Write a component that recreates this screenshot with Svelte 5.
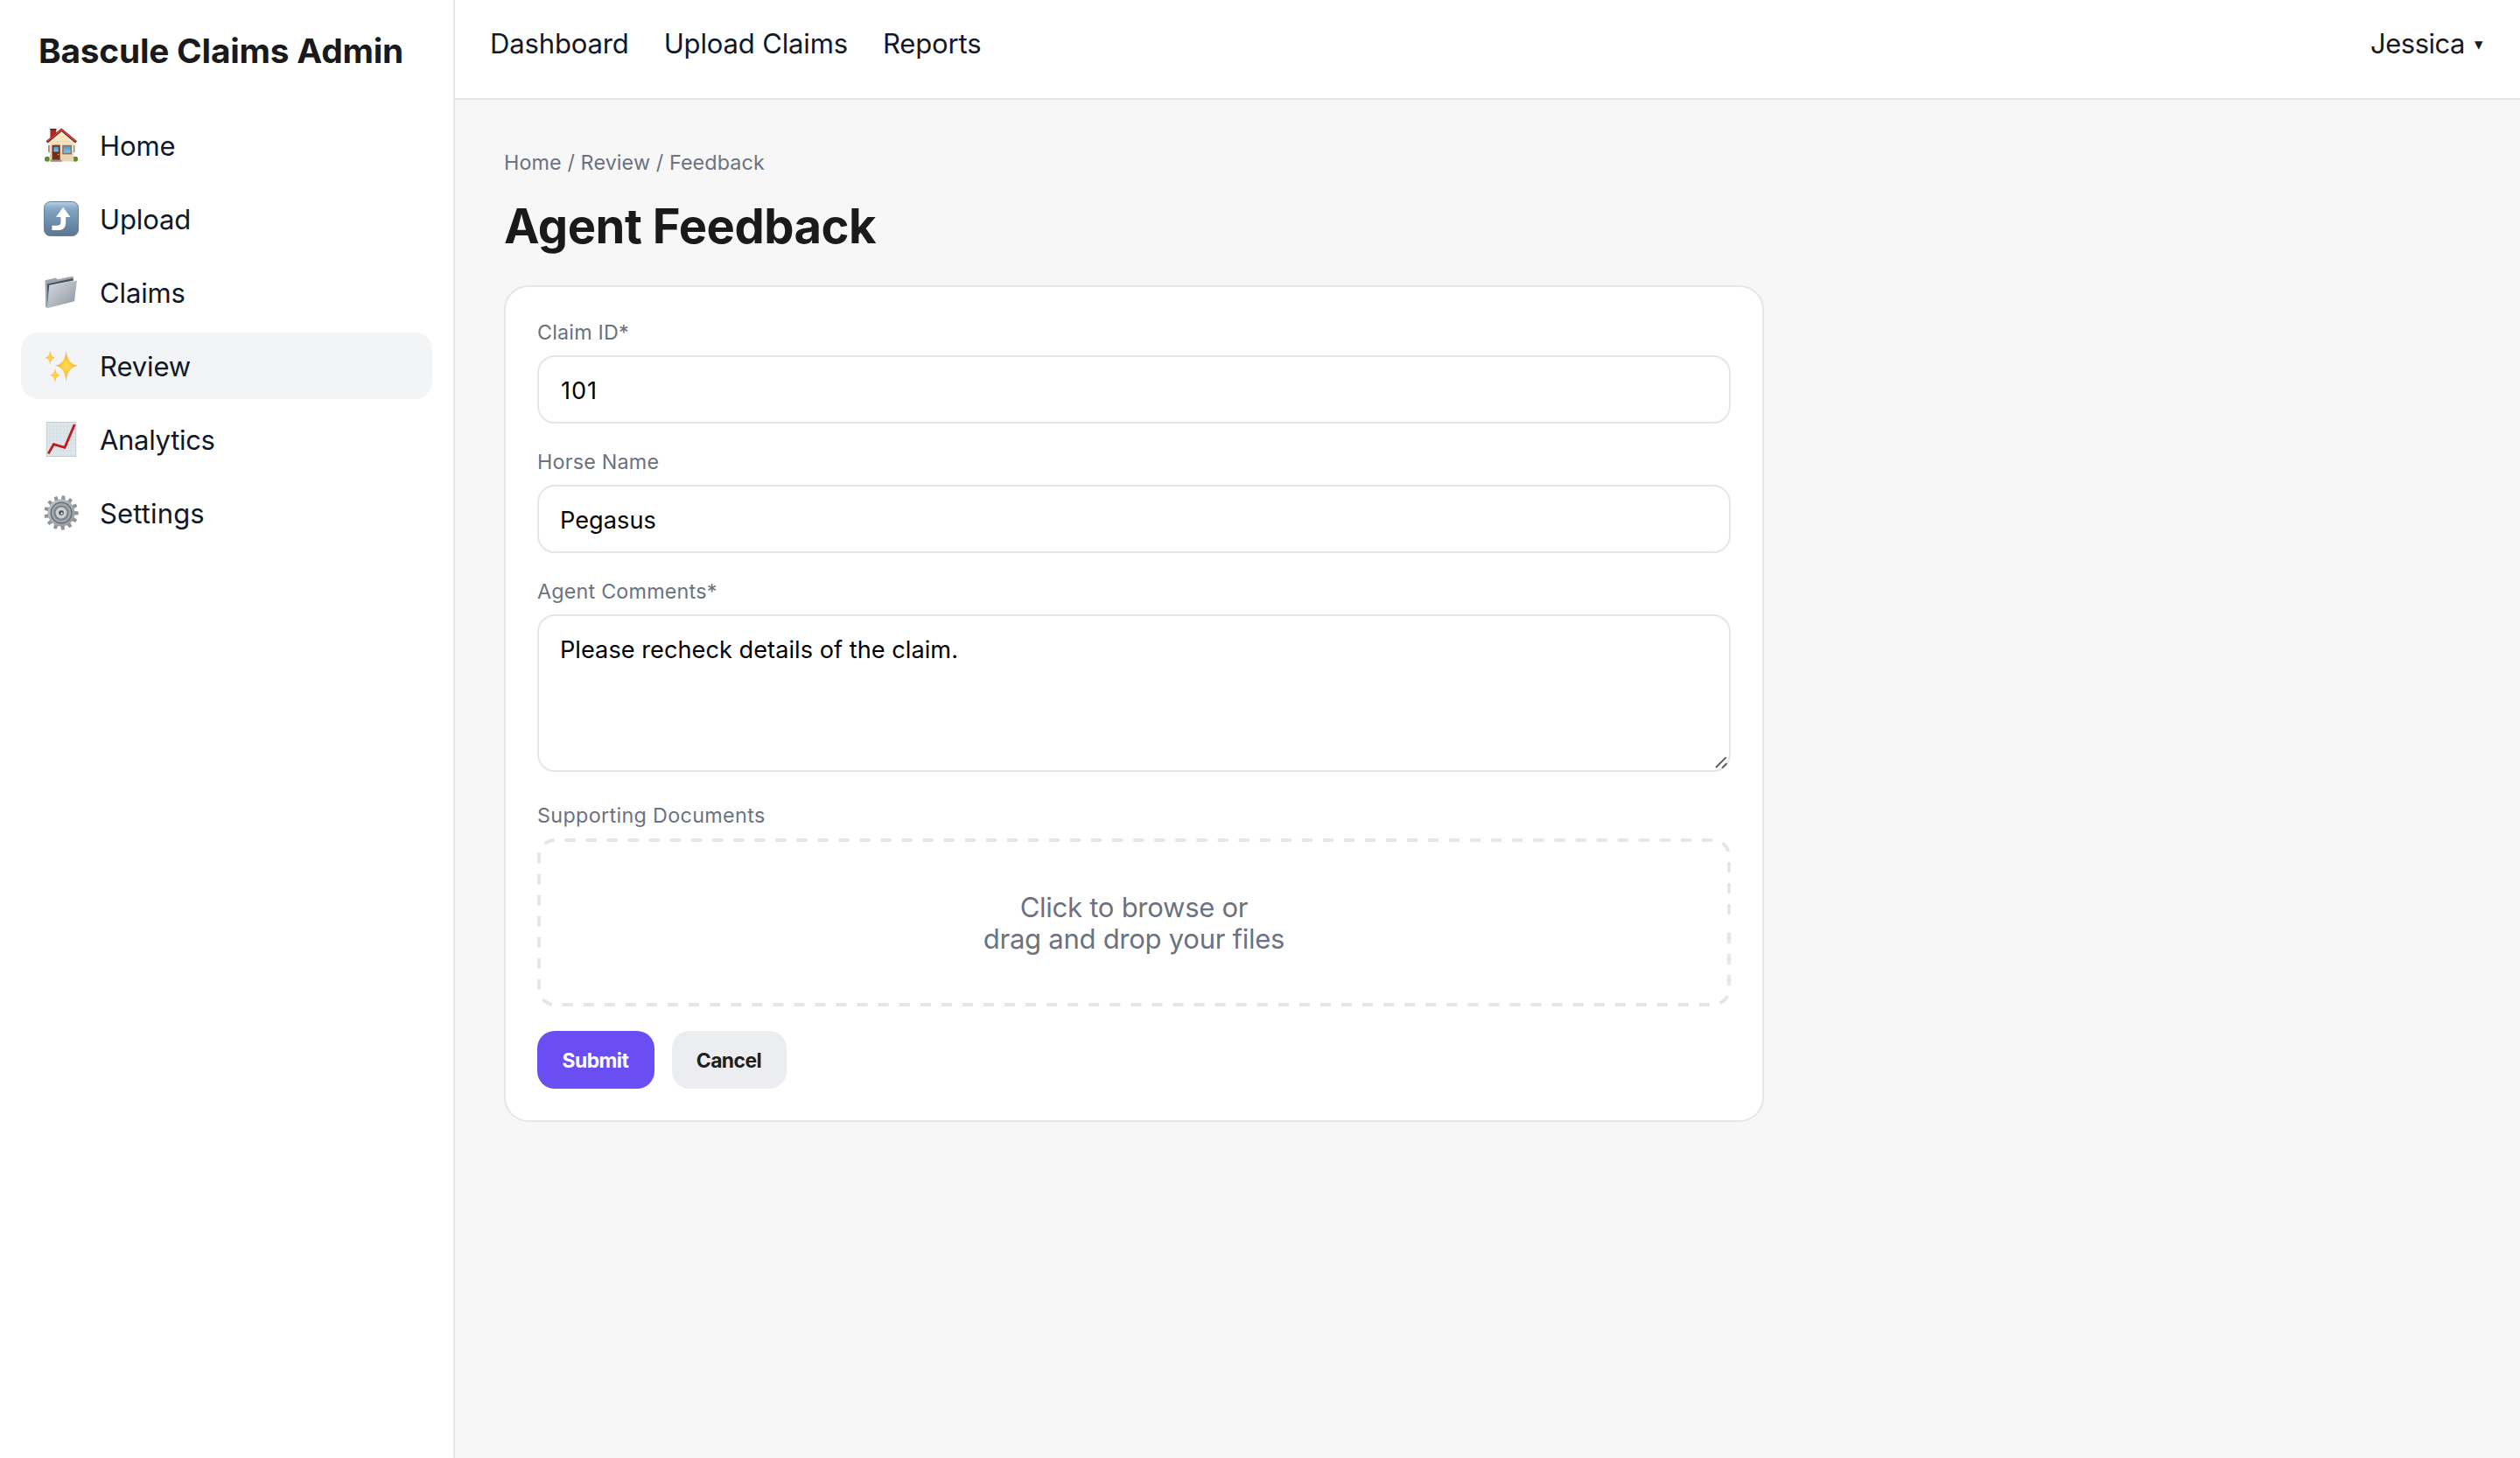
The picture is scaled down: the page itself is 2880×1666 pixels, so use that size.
<script>
  const menu = ['Home', 'Upload', 'Claims', 'Review', 'Analytics', 'Settings'];
  const active = 'Review';
  const links = ['Dashboard', 'Upload Claims', 'Reports'];
  const teeth = Array.from({ length: 13 }, (_, i) => (i * 360) / 13);

  let claimId = $state('101');
  let horseName = $state('Pegasus');
  let comments = $state('Please recheck details of the claim.');
</script>

{#snippet icon(name)}
  <svg class="icon" viewBox="0 0 40 40" aria-hidden="true">
    {#if name === 'Home'}
      <defs>
        <linearGradient id="wall" x1="0" y1="0" x2="0" y2="1">
          <stop offset="0" stop-color="#fdeccb" /><stop offset="1" stop-color="#e9d3ae" />
        </linearGradient>
        <linearGradient id="pane" x1="0" y1="0" x2="0" y2="1">
          <stop offset="0" stop-color="#4a97d6" /><stop offset="1" stop-color="#86c2ee" />
        </linearGradient>
      </defs>
      <path d="M7.4 1.2h6.8v8l-6.8 5.6z" fill="#a92b25" />
      <path d="M7.2 1h7.2v1.6H7.2z" fill="#7c1b18" />
      <circle cx="4" cy="35.8" r="3" fill="#5a8a2c" />
      <circle cx="36" cy="35.8" r="3" fill="#5a8a2c" />
      <path d="M5.2 20h1.8v8H5.2zM33.6 20h1.8v8h-1.8z" fill="#8a7a6a" />
      <path d="M6.6 15 20.3 3.8 34.2 15v23.6H6.6z" fill="url(#wall)" />
      <path d="M6.8 28h27M6.8 33h27M7 22h26M11 15.5h18" stroke="#dfc7a0" stroke-width=".4" />
      <path d="M3.6 16.4 20.3 2.4 37 16.4" fill="none" stroke="#3a2422" stroke-width="3" />
      <path d="M4 15.6 20.3 2.2 36.6 15.6" fill="none" stroke="#dc3a35" stroke-width="1.9" />
      <path d="M9.4 19.6h9.4v17.8H9.4z" fill="#8d4a34" />
      <path d="M10.2 20.4h7.8v16.2h-7.8z" fill="#6d2f20" />
      <path d="M11.4 21.6h5.4v5.8h-5.4z" fill="url(#pane)" />
      <circle cx="16.6" cy="30.6" r=".9" fill="#d9a441" />
      <path d="M21.2 19.8H32v10.6H21.2z" fill="#93705a" />
      <path d="M22.6 21.2h8v7.4h-8z" fill="url(#pane)" />
      <path d="M7.6 36.6h13v2.2h-13z" fill="#9b8f88" />
    {:else if name === 'Upload'}
      <defs>
        <linearGradient id="key" x1="0" y1="0" x2="0" y2="1">
          <stop offset="0" stop-color="#bcd2e2" /><stop offset=".16" stop-color="#8fafcb" />
          <stop offset=".3" stop-color="#7b9fc0" /><stop offset="1" stop-color="#5b7690" />
        </linearGradient>
      </defs>
      <rect x=".5" y=".5" width="39" height="39" rx="7" fill="url(#key)" stroke="#64809a" />
      <path d="M22.2 6.8 30.4 18h-5.2v6.4c0 5.8-3.4 8.6-9.2 8.6H9.4v-5.2h5.4c3.2 0 4.6-1.2 4.6-4.4V18H14z" fill="#fff" />
    {:else if name === 'Claims'}
      <defs>
        <linearGradient id="flap" x1="0" y1="0" x2="1" y2="1">
          <stop offset="0" stop-color="#d5d8dd" /><stop offset=".5" stop-color="#b4b9c1" />
          <stop offset="1" stop-color="#8b929c" />
        </linearGradient>
      </defs>
      <path d="M1.6 6.2 14 3.6l1.6 1.6L33.6 1.4l.6 8L4.4 37.6l-2.4-.8z" fill="#9da6b0" />
      <path d="M4 10.6 33.6 4v5L5.6 20l-1.2 17z" fill="#43545f" />
      <path d="M6.2 12.4 38 6.2 35 30.2 3.9 38.2z" fill="url(#flap)" />
      <path d="M6.2 12.4 38 6.2" stroke="#eceef1" stroke-width=".8" />
    {:else if name === 'Review'}
      <defs>
        <radialGradient id="spark">
          <stop offset="0" stop-color="#ffe14d" /><stop offset=".4" stop-color="#fdc93f" />
          <stop offset="1" stop-color="#f0a050" />
        </radialGradient>
      </defs>
      <g fill="url(#spark)">
        <path d="M25.6 2.4Q27 18 39.2 19.8 27 21.6 25.6 38 24.2 21.6 12.8 19.8 24.2 18 25.6 2.4z" />
        <path d="M7.3 2.4Q8 9.6 12.8 10.4 8 11.4 7.3 19 6.6 11.4 1.8 10.4 6.6 9.6 7.3 2.4z" />
        <path d="M13 22.8Q13.8 30 18.8 30.8 13.8 31.6 13 38.6 12.2 31.6 7.2 30.8 12.2 30 13 22.8z" />
      </g>
    {:else if name === 'Analytics'}
      <rect x="3.2" y=".6" width="33.6" height="38.8" fill="#dfe7ec" stroke="#b9c0c5" stroke-width=".8" />
      <path d="M7 1v38M11 1v38M15 1v38M19 1v38M23 1v38M27 1v38M31 1v38M4 5h32M4 9h32M4 13h32M4 17h32M4 21h32M4 25h32M4 29h32M4 33h32" stroke="#cbd6de" stroke-width=".5" />
      <path d="M5.2 36.4 11.4 25.6 24 29.4 35.2 3" fill="none" stroke="#c4161c" stroke-width="2.8" />
    {:else}
      <defs>
        <linearGradient id="metal" x1="0" y1="0" x2="1" y2="1">
          <stop offset="0" stop-color="#c3c7ca" /><stop offset="1" stop-color="#8f959a" />
        </linearGradient>
      </defs>
      {#each teeth as angle}
        <path d="M17.6 6.4 18.2.4h3.6l.6 6z" fill="#8d949a" transform="rotate({angle + 8} 20 20)" />
      {/each}
      <circle cx="20" cy="20" r="15.4" fill="url(#metal)" />
      <circle cx="20" cy="20" r="11.8" fill="#a3a9ad" stroke="#666d73" stroke-width="1.4" />
      <circle cx="20" cy="20" r="8.8" fill="#7d8489" />
      <circle cx="20" cy="20" r="6.4" fill="#cdd0d3" />
      <circle cx="20" cy="20" r="2.8" fill="#4c5358" />
      <circle cx="20.6" cy="20.6" r="1.2" fill="#dfe2e4" />
    {/if}
  </svg>
{/snippet}

<div class="app">
  <aside class="sidebar">
    <div class="brand">Bascule Claims Admin</div>
    <nav class="menu">
      {#each menu as item}
        <a class="menu-item {item.toLowerCase()}" class:active={item === active} href="#{item.toLowerCase()}">
          {@render icon(item)}
          <span>{item}</span>
        </a>
      {/each}
    </nav>
  </aside>

  <div class="page">
    <header class="topbar">
      <nav class="links">
        {#each links as link}
          <a href="#top">{link}</a>
        {/each}
      </nav>
      <div class="user"><span>Jessica</span><span class="caret">▾</span></div>
    </header>

    <main class="content">
      <div class="crumbs">Home / Review / Feedback</div>
      <h1>Agent Feedback</h1>

      <form class="card" onsubmit={(e) => e.preventDefault()}>
        <div class="field">
          <label for="claim">Claim ID*</label>
          <input id="claim" class="digits" bind:value={claimId} />
        </div>
        <div class="field">
          <label for="horse">Horse Name</label>
          <input id="horse" bind:value={horseName} />
        </div>
        <div class="field comments">
          <label for="comments">Agent Comments*</label>
          <div class="area">
            <textarea id="comments" bind:value={comments}></textarea>
            <svg class="grip" viewBox="0 0 16 16" aria-hidden="true">
              <path d="M2 14 13.6 2.4M9 14.6l5.4-5.4" />
            </svg>
          </div>
        </div>
        <div class="field">
          <div class="label docs">Supporting Documents</div>
          <div class="dropzone">
            <svg class="outline" viewBox="0 0 1364 192" aria-hidden="true">
              <path d="M1362 96V172A18 18 0 0 1 1344 190H20A18 18 0 0 1 2 172V20A18 18 0 0 1 20 2H1344A18 18 0 0 1 1362 20V96" />
            </svg>
            <div>Click to browse or</div>
            <div>drag and drop your files</div>
          </div>
        </div>
        <div class="actions">
          <button class="submit" type="submit">Submit</button>
          <button class="cancel" type="button">Cancel</button>
        </div>
      </form>
    </main>
  </div>
</div>

<style>
  :global(body) {
    margin: 0;
    background: #f7f7f7;
  }
  .app {
    display: flex;
    min-height: 1666px;
    font-family: Inter, 'Liberation Sans', sans-serif;
    color: #1c1c1e;
  }
  a {
    color: #111827;
    text-decoration: none;
  }
  .sidebar {
    box-sizing: border-box;
    flex: none;
    width: 520px;
    padding: 34px 24px;
    background: #fff;
    border-right: 2px solid #e5e5ea;
  }
  .brand {
    padding-left: 20px;
    margin-bottom: 46px;
    font-size: 38.8px;
    font-weight: 700;
    line-height: 48px;
    letter-spacing: -0.2px;
    color: #1a1a1a;
  }
  .menu {
    display: flex;
    flex-direction: column;
    gap: 8px;
  }
  .menu-item {
    display: flex;
    align-items: center;
    gap: 24px;
    height: 76px;
    padding: 0 26px;
    border-radius: 20px;
    font-size: 31px;
    letter-spacing: -0.12px;
  }
  .menu-item span {
    padding-top: 1px;
  }
  .menu-item.analytics {
    letter-spacing: -0.3px;
  }
  .menu-item.settings {
    letter-spacing: 0.15px;
  }
  .menu-item.active {
    background: #f3f4f6;
  }
  .icon {
    width: 40px;
    height: 40px;
  }
  .page {
    flex: 1;
    min-width: 0;
  }
  .topbar {
    box-sizing: border-box;
    display: flex;
    justify-content: space-between;
    height: 114px;
    padding: 28px 42px 0 40px;
    background: #fff;
    border-bottom: 2px solid #e5e5ea;
    font-size: 31px;
    line-height: 44px;
  }
  .links {
    display: flex;
    gap: 40px;
    letter-spacing: -0.14px;
  }
  .user {
    display: flex;
    gap: 11px;
    letter-spacing: -0.5px;
    color: #1a1a1a;
  }
  .caret {
    font-size: 19px;
    line-height: 46px;
    letter-spacing: 0;
  }
  .content {
    padding: 57px 56px 0;
  }
  .crumbs {
    font-size: 23.3px;
    line-height: 30px;
    letter-spacing: 0.12px;
    color: #6b7280;
  }
  h1 {
    margin: 24px 0 35px;
    font-size: 54.3px;
    font-weight: 700;
    line-height: 66px;
    letter-spacing: -0.45px;
    color: #1a1a1a;
  }
  .card {
    box-sizing: border-box;
    display: flex;
    flex-direction: column;
    gap: 28px;
    width: 1440px;
    padding: 36px;
    background: #fff;
    border: 2px solid #e5e5ea;
    border-radius: 28px;
  }
  .field {
    display: flex;
    flex-direction: column;
    gap: 11px;
  }
  .field.comments {
    margin-bottom: 6px;
  }
  label,
  .label {
    padding-top: 1px;
    font-size: 23.3px;
    line-height: 30px;
    letter-spacing: 0.21px;
    color: #6b7280;
  }
  .label.docs {
    letter-spacing: 0.35px;
  }
  input,
  textarea {
    display: block;
    box-sizing: border-box;
    width: 100%;
    margin: 0;
    padding: 0 24px;
    border: 2px solid #e5e5ea;
    border-radius: 20px;
    outline: none;
    background: #fff;
    color: #000;
    font-family: inherit;
    font-size: 27.1px;
    letter-spacing: 0.06px;
  }
  input {
    height: 78px;
    padding-top: 2px;
  }
  input.digits {
    padding-left: 25px;
    letter-spacing: 1px;
  }
  .area {
    position: relative;
  }
  textarea {
    height: 180px;
    padding: 22px 24px 20px;
    line-height: 34px;
    resize: none;
  }
  .grip {
    position: absolute;
    right: 3px;
    bottom: 3px;
    width: 16px;
    height: 16px;
    fill: none;
    stroke: #5c5c5c;
    stroke-width: 2;
  }
  .dropzone {
    position: relative;
    box-sizing: border-box;
    display: flex;
    flex-direction: column;
    align-items: center;
    justify-content: center;
    height: 192px;
    padding-top: 2px;
    font-size: 31px;
    line-height: 36px;
    letter-spacing: -0.26px;
    color: #6b7280;
  }
  .outline {
    position: absolute;
    inset: 0;
    width: 100%;
    height: 100%;
    fill: none;
    stroke: #e5e5ea;
    stroke-width: 4;
    stroke-dasharray: 12.03;
    stroke-dashoffset: 12.2;
  }
  .actions {
    display: flex;
    gap: 20px;
  }
  button {
    height: 66px;
    padding: 1px 1px 0 0;
    border: 0;
    border-radius: 20px;
    font-family: inherit;
    font-size: 22.8px;
    font-weight: 700;
    letter-spacing: -0.5px;
  }
  .submit {
    width: 134px;
    background: #6b4ef3;
    color: #fff;
  }
  .cancel {
    width: 131px;
    background: #ecedf1;
    color: #1f1f1f;
  }
</style>
